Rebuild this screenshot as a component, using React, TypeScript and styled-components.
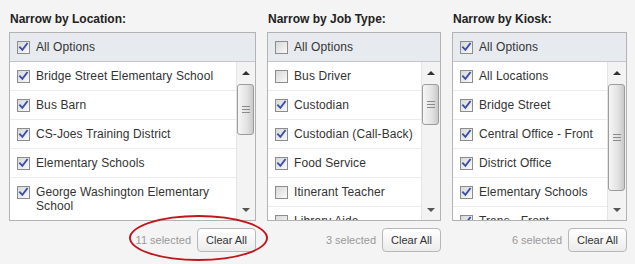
import React from 'react'
import styled, { createGlobalStyle } from 'styled-components'

const GlobalStyle = createGlobalStyle`
  html, body {
    margin: 0;
    padding: 0;
    background: #f4f4f4;
  }
  * {
    box-sizing: border-box;
  }
`

interface Option {
  label: string,
  checked: boolean
}

interface FilterProps {
  title: string,
  width: number,
  allChecked: boolean,
  options: Option[],
  thumb: number,
  selected: number
}

const CheckBox: React.FC<{ checked: boolean }> = ({ checked }) => (
  <StyledCheck width="13" height="13" viewBox="0 0 13 13">
    <defs>
      <linearGradient id="cbFill" x1="0" y1="0" x2="1" y2="1">
        <stop offset="0" stopColor="#d6d6d6" />
        <stop offset="1" stopColor="#fbfbfb" />
      </linearGradient>
    </defs>
    <rect x="0.5" y="0.5" width="12" height="12" fill="url(#cbFill)" stroke="#8c8c8c" />
    {checked && (
      <path d="M3 6.3 L5.4 8.8 L10 2.8" fill="none" stroke="#3a4fa6" strokeWidth="1.9" strokeLinecap="square" />
    )}
  </StyledCheck>
)

const ScrollBar: React.FC<{ thumb: number }> = ({ thumb }) => (
  <StyledScroll>
    <StyledArrowBox>
      <StyledArrowUp />
    </StyledArrowBox>
    <StyledThumb style={{ height: thumb }}>
      <StyledGrip />
      <StyledGrip />
      <StyledGrip />
    </StyledThumb>
    <StyledTrackRest />
    <StyledArrowBox>
      <StyledArrowDown />
    </StyledArrowBox>
  </StyledScroll>
)

const FilterPanel: React.FC<FilterProps> = ({ title, width, allChecked, options, thumb, selected }) => {
  return (
    <StyledPanel width={width}>
      <StyledTitle>{title}</StyledTitle>
      <StyledBox>
        <StyledHeader>
          <CheckBox checked={allChecked} />
          <span>All Options</span>
        </StyledHeader>
        <StyledList>
          <StyledItems>
            {options.map(o => (
              <StyledRow key={o.label}>
                <CheckBox checked={o.checked} />
                <StyledLabel>{o.label}</StyledLabel>
              </StyledRow>
            ))}
          </StyledItems>
          <ScrollBar thumb={thumb} />
        </StyledList>
      </StyledBox>
      <StyledFooter>
        <StyledCount>{selected} selected</StyledCount>
        <ClearBtn>Clear All</ClearBtn>
      </StyledFooter>
    </StyledPanel>
  )
}

const locations: Option[] = [
  { label: 'Bridge Street Elementary School', checked: true },
  { label: 'Bus Barn', checked: true },
  { label: 'CS-Joes Training District', checked: true },
  { label: 'Elementary Schools', checked: true },
  { label: 'George Washington Elementary School', checked: true },
  { label: 'High School', checked: true },
]

const jobTypes: Option[] = [
  { label: 'Bus Driver', checked: false },
  { label: 'Custodian', checked: true },
  { label: 'Custodian (Call-Back)', checked: true },
  { label: 'Food Service', checked: true },
  { label: 'Itinerant Teacher', checked: false },
  { label: 'Library Aide', checked: false },
]

const kiosks: Option[] = [
  { label: 'All Locations', checked: true },
  { label: 'Bridge Street', checked: true },
  { label: 'Central Office - Front', checked: true },
  { label: 'District Office', checked: true },
  { label: 'Elementary Schools', checked: true },
  { label: 'Trans - Front', checked: true },
]

const App: React.FC = () => {
  return (
    <>
      <GlobalStyle />
      <StyledPage>
        <FilterPanel title="Narrow by Location:" width={247} allChecked options={locations} thumb={51} selected={11} />
        <FilterPanel title="Narrow by Job Type:" width={174} allChecked={false} options={jobTypes} thumb={41} selected={3} />
        <FilterPanel title="Narrow by Kiosk:" width={175} allChecked options={kiosks} thumb={107} selected={6} />
        <StyledCircle />
      </StyledPage>
    </>
  )
}

const StyledPage = styled.div`
  position: relative;
  display: flex;
  align-items: flex-start;
  gap: 11px;
  width: 635px;
  height: 264px;
  padding: 12px 8px 0 9px;
  font-family: "Liberation Sans", Arial, sans-serif;
  color: #333;
`

const StyledPanel = styled.div<{ width: number }>`
  width: ${props => props.width}px;
  flex: none;
`

const StyledTitle = styled.div`
  font-size: 12px;
  font-weight: 700;
  line-height: 14px;
  color: #222;
  padding-left: 1px;
  margin-bottom: 6px;
`

const StyledBox = styled.div`
  border: 1px solid #b3b3b3;
  background: #fff;
`

const StyledCheck = styled.svg`
  flex: none;
  display: block;
`

const StyledHeader = styled.div`
  display: flex;
  align-items: center;
  gap: 6px;
  height: 29px;
  padding-left: 7px;
  background: #e7ebef;
  border-bottom: 1px solid #c3c7cb;
  font-size: 12px;
  color: #333;
  letter-spacing: 0.1px;
`

const StyledList = styled.div`
  display: flex;
  height: 158px;
`

const StyledItems = styled.div`
  flex: 1;
  min-width: 0;
  overflow: hidden;
`

const StyledRow = styled.div`
  display: flex;
  align-items: flex-start;
  gap: 6px;
  padding: 7px 3px 7px 7px;
  border-bottom: 1px solid #ececec;
  font-size: 12px;
  line-height: 14px;
  letter-spacing: 0.1px;

  svg {
    margin-top: 1px;
  }
`

const StyledLabel = styled.span`
  color: #333;
`

const StyledScroll = styled.div`
  width: 19px;
  flex: none;
  display: flex;
  flex-direction: column;
  background: #f3f3f3;
  border-left: 1px solid #e4e4e4;
  padding-right: 1px;
`

const StyledArrowBox = styled.div`
  height: 21px;
  display: flex;
  align-items: center;
  justify-content: center;
`

const StyledArrowUp = styled.div`
  width: 0;
  height: 0;
  border-left: 4px solid transparent;
  border-right: 4px solid transparent;
  border-bottom: 4px solid #333;
`

const StyledArrowDown = styled.div`
  width: 0;
  height: 0;
  border-left: 4px solid transparent;
  border-right: 4px solid transparent;
  border-top: 4px solid #555;
`

const StyledThumb = styled.div`
  flex: none;
  margin-top: 1px;
  display: flex;
  flex-direction: column;
  align-items: center;
  justify-content: center;
  gap: 2px;
  border: 1px solid #9c9c9c;
  border-radius: 3px;
  background: linear-gradient(to right, #f6f6f6, #e2e2e2 60%, #c9c9c9);
`

const StyledGrip = styled.div`
  width: 8px;
  height: 1px;
  background: #8a8a8a;
`

const StyledTrackRest = styled.div`
  flex: 1;
`

const StyledFooter = styled.div`
  display: flex;
  justify-content: flex-end;
  align-items: center;
  gap: 6px;
  margin-top: 7px;
`

const StyledCount = styled.span`
  font-size: 11px;
  color: #999;
`

const ClearBtn = styled.button`
  height: 24px;
  padding: 0 8px;
  font-family: "Liberation Sans", Arial, sans-serif;
  font-size: 11px;
  color: #333;
  border: 1px solid #b8b8b8;
  border-radius: 4px;
  background: linear-gradient(to bottom, #ffffff, #ececec);
  cursor: pointer;
`

const StyledCircle = styled.div`
  position: absolute;
  left: 129px;
  top: 215px;
  width: 139px;
  height: 46px;
  border: 2px solid #c1161d;
  border-radius: 50%;
  pointer-events: none;
`

export default App
